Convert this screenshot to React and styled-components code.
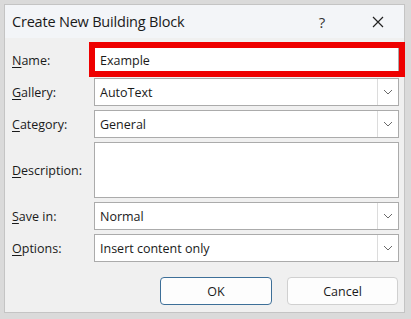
import { Fragment } from "react";
import styled, { createGlobalStyle } from "styled-components";

const GlobalStyle = createGlobalStyle`
  html, body {
    margin: 0;
    padding: 0;
    background: #d9d9d9;
    font-family: "Open Sans", "Noto Sans", sans-serif;
  }
`;

const Frame = styled.div`
  width: 411px;
  height: 319px;
  box-sizing: border-box;
  padding: 4px 6px 6px 4px;
  background: #dadada;
`;

const Dialog = styled.div`
  height: 100%;
  box-sizing: border-box;
  border: 1px solid #c4c4c4;
  background: #f0f0f0;
  display: flex;
  flex-direction: column;
`;

const TitleBar = styled.div`
  height: 33px;
  display: flex;
  align-items: center;
  padding-left: 7px;
  background: #f3f5f8;
`;

const Title = styled.div`
  flex: 1;
  font-size: 14.5px;
  color: #1a1a1a;
  letter-spacing: -0.2px;
`;

const TitleButton = styled.div`
  width: ${(p) => p.$w}px;
  display: flex;
  align-items: center;
  justify-content: center;
  font-size: 15px;
  color: #333;
`;

const Form = styled.div`
  display: grid;
  grid-template-columns: 82px 1fr;
  row-gap: 4px;
  padding: 8px 5px 0 7px;
  align-items: center;
`;

const Label = styled.div`
  font-size: 12.5px;
  color: #1a1a1a;
  u {
    text-decoration: underline;
    text-underline-offset: 2px;
  }
`;

const Field = styled.div`
  position: relative;
  height: ${(p) => p.$h || 28}px;
  box-sizing: border-box;
  border: 1px solid #ababab;
  background: #fff;
  display: flex;
  align-items: center;
  font-size: 12.5px;
  color: #1a1a1a;
`;

const FieldText = styled.span`
  flex: 1;
  padding-left: 5px;
`;

const DropButton = styled.div`
  width: 20px;
  align-self: stretch;
  border-left: 1px solid #dcdcdc;
  display: flex;
  align-items: center;
  justify-content: center;
`;

const Highlight = styled.div`
  position: absolute;
  top: -5px;
  left: -6px;
  right: -7px;
  bottom: -4px;
  border: 6px solid #ee0000;
  pointer-events: none;
`;

const Footer = styled.div`
  display: flex;
  justify-content: flex-end;
  gap: 15px;
  padding: 15px 6px 0 0;
`;

const Button = styled.button`
  width: ${(p) => p.$w}px;
  height: 28px;
  border-radius: 4px;
  border: 1px solid ${(p) => (p.$primary ? "#3d6f98" : "#d0d0d0")};
  background: #fdfdfd;
  font-family: inherit;
  font-size: 12.5px;
  color: #1a1a1a;
`;

function Chevron() {
  return (
    <svg width="10" height="6" viewBox="0 0 10 6">
      <path d="M1 1 L5 5 L9 1" fill="none" stroke="#6a6a6a" strokeWidth="1" />
    </svg>
  );
}

function CloseIcon() {
  return (
    <svg width="12" height="12" viewBox="0 0 12 12">
      <path d="M1 1 L11 11 M11 1 L1 11" stroke="#222" strokeWidth="1.2" />
    </svg>
  );
}

const rows = [
  { key: "G", rest: "allery:", value: "AutoText", drop: true },
  { key: "C", rest: "ategory:", value: "General", drop: true },
  { key: "D", rest: "escription:", value: "", h: 56 },
  { key: "S", rest: "ave in:", value: "Normal", drop: true },
  { key: "O", rest: "ptions:", value: "Insert content only", drop: true },
];

export default function App() {
  return (
    <>
      <GlobalStyle />
      <Frame>
        <Dialog>
          <TitleBar>
            <Title>Create New Building Block</Title>
            <TitleButton $w={60}>?</TitleButton>
            <TitleButton $w={52}>
              <CloseIcon />
            </TitleButton>
          </TitleBar>
          <Form>
            <Label>
              <u>N</u>ame:
            </Label>
            <Field>
              <FieldText>Example</FieldText>
              <Highlight />
            </Field>
            {rows.map((r) => (
              <Fragment key={r.key}>
                <Label>
                  <u>{r.key}</u>
                  {r.rest}
                </Label>
                <Field $h={r.h}>
                  <FieldText>{r.value}</FieldText>
                  {r.drop && (
                    <DropButton>
                      <Chevron />
                    </DropButton>
                  )}
                </Field>
              </Fragment>
            ))}
          </Form>
          <Footer>
            <Button $primary $w={112}>OK</Button>
            <Button $w={111}>Cancel</Button>
          </Footer>
        </Dialog>
      </Frame>
    </>
  );
}
